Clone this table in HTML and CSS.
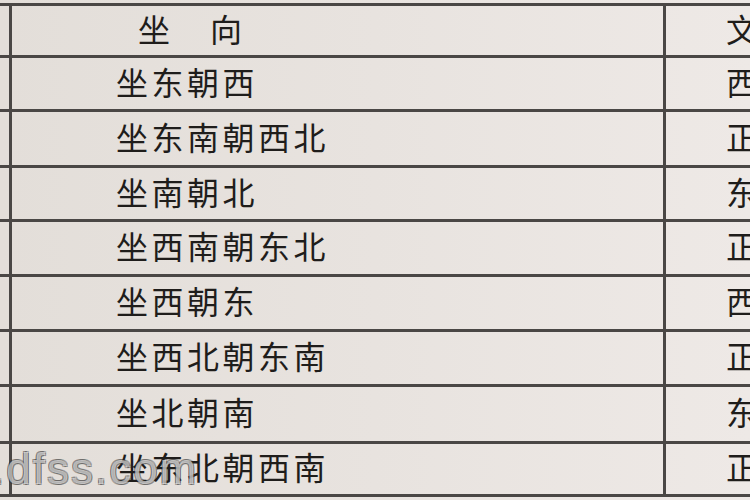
FILE: index.html
```html
<!DOCTYPE html>
<html lang="zh">
<head>
<meta charset="utf-8">
<link rel="stylesheet" href="styles.css">
</head>
<body>
<div class="photo">
  <div class="sheet">
    <div class="cell edge"></div><div class="cell main head"><span>坐</span><span>向</span></div><div class="cell side">文</div>
    <div class="cell edge"></div><div class="cell main">坐东朝西</div><div class="cell side">西</div>
    <div class="cell edge"></div><div class="cell main">坐东南朝西北</div><div class="cell side">正</div>
    <div class="cell edge"></div><div class="cell main">坐南朝北</div><div class="cell side">东</div>
    <div class="cell edge"></div><div class="cell main">坐西南朝东北</div><div class="cell side">正</div>
    <div class="cell edge"></div><div class="cell main">坐西朝东</div><div class="cell side">西</div>
    <div class="cell edge"></div><div class="cell main">坐西北朝东南</div><div class="cell side">正</div>
    <div class="cell edge"></div><div class="cell main">坐北朝南</div><div class="cell side">东</div>
    <div class="cell edge"></div><div class="cell main">坐东北朝西南</div><div class="cell side">正</div>
  </div>
  <div class="watermark">.dfss.com</div>
</div>
</body>
</html>
```
FILE: styles.css
```css
html, body {
  margin: 0;
  padding: 0;
}
body {
  width: 750px;
  height: 500px;
  overflow: hidden;
  background: #efebe8;
  font-family: "Noto Sans CJK SC", "Noto Sans", sans-serif;
}
.photo {
  position: relative;
  width: 750px;
  height: 500px;
  overflow: hidden;
  padding-top: 3px;
  box-sizing: border-box;
  background: linear-gradient(90deg, #e3ded9 0%, #e8e3df 50%, #eee9e6 100%);
}
.sheet {
  display: grid;
  grid-template-columns: 12px 654px 120px;
  grid-template-rows: 52px 54px 56px 54px 55px 55px 55px 57px 50px;
  border-top: 3px solid #4a4745;
  border-bottom: 3px solid #4a4745;
}
.cell {
  border-bottom: 3px solid #4a4745;
  display: flex;
  align-items: center;
  color: #1f1d1b;
  font-size: 32px;
  font-weight: 400;
  line-height: 1;
  padding-bottom: 6px;
  box-sizing: border-box;
  letter-spacing: 3.5px;
  white-space: nowrap;
  overflow: hidden;
}
.sheet > .cell:nth-last-child(-n+3) {
  border-bottom: none;
}
.edge {
  border-right: 3px solid #4a4745;
}
.main {
  border-right: 3px solid #4a4745;
  padding-left: 104px;
}
.main.head {
  padding-left: 126px;
  gap: 40px;
  letter-spacing: 0;
}
.side {
  padding-left: 60px;
}
.watermark {
  position: absolute;
  left: -8px;
  top: 444px;
  font-family: "Liberation Sans", sans-serif;
  font-size: 44px;
  color: rgba(255, 255, 255, 0.6);
  letter-spacing: 2px;
  text-shadow: -1px -1px 0 rgba(40,40,40,0.45), 1px 1px 0 rgba(40,40,40,0.45), 1px -1px 0 rgba(40,40,40,0.35), -1px 1px 0 rgba(40,40,40,0.35);
}
```
